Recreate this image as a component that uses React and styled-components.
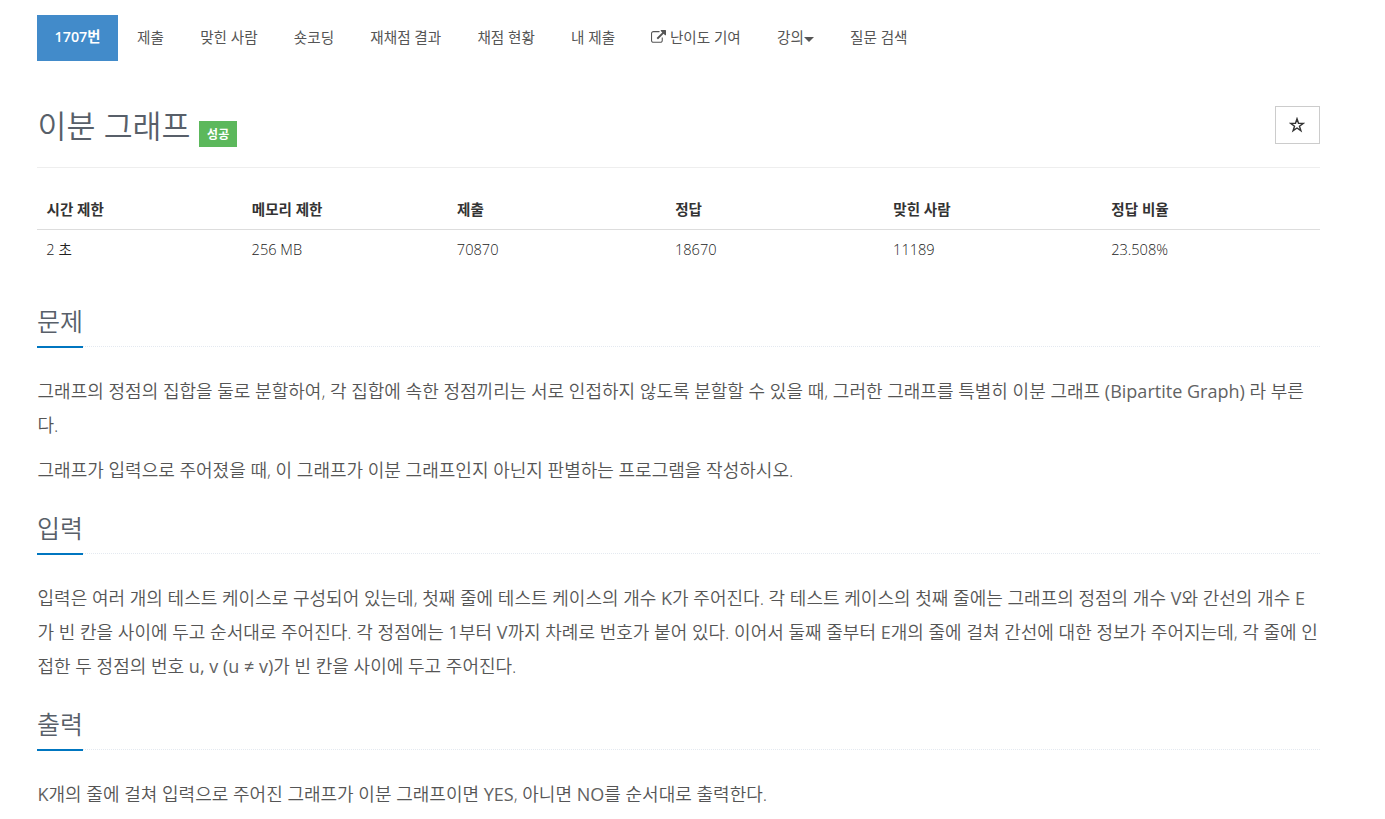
import React from "react";
import styled, { createGlobalStyle } from "styled-components";

const menus = [
  { name: "1707번", active: true },
  { name: "제출" },
  { name: "맞힌 사람" },
  { name: "숏코딩" },
  { name: "재채점 결과" },
  { name: "채점 현황" },
  { name: "내 제출" },
  { name: "난이도 기여", external: true },
  { name: "강의", dropdown: true },
  { name: "질문 검색" },
];

const infos = [
  { label: "시간 제한", value: "2 초", width: "16%" },
  { label: "메모리 제한", value: "256 MB", width: "16%" },
  { label: "제출", value: "70870", width: "17%" },
  { label: "정답", value: "18670", width: "17%" },
  { label: "맞힌 사람", value: "11189", width: "17%" },
  { label: "정답 비율", value: "23.508%", width: "17%" },
];

const sections = [
  {
    title: "문제",
    paragraphs: [
      "그래프의 정점의 집합을 둘로 분할하여, 각 집합에 속한 정점끼리는 서로 인접하지 않도록 분할할 수 있을 때, 그러한 그래프를 특별히 이분 그래프 (Bipartite Graph) 라 부른다.",
      "그래프가 입력으로 주어졌을 때, 이 그래프가 이분 그래프인지 아닌지 판별하는 프로그램을 작성하시오.",
    ],
  },
  {
    title: "입력",
    paragraphs: [
      "입력은 여러 개의 테스트 케이스로 구성되어 있는데, 첫째 줄에 테스트 케이스의 개수 K가 주어진다. 각 테스트 케이스의 첫째 줄에는 그래프의 정점의 개수 V와 간선의 개수 E가 빈 칸을 사이에 두고 순서대로 주어진다. 각 정점에는 1부터 V까지 차례로 번호가 붙어 있다. 이어서 둘째 줄부터 E개의 줄에 걸쳐 간선에 대한 정보가 주어지는데, 각 줄에 인접한 두 정점의 번호 u, v (u ≠ v)가 빈 칸을 사이에 두고 주어진다.",
    ],
  },
  {
    title: "출력",
    paragraphs: [
      "K개의 줄에 걸쳐 입력으로 주어진 그래프가 이분 그래프이면 YES, 아니면 NO를 순서대로 출력한다.",
    ],
  },
];

// latin words are set in the regular weight, the light one is too thin next to hangul
function Text({ children }) {
  return children
    .split(/([A-Za-z0-9(][A-Za-z0-9(), ≠]*[A-Za-z0-9)]|[A-Za-z0-9])/)
    .map((part, i) => (i % 2 ? <Latin key={i}>{part}</Latin> : part));
}

function ExternalIcon() {
  return (
    <svg width="15" height="15" viewBox="0 0 1792 1792" fill="currentColor">
      <path d="M1408 928v320q0 119-84.5 203.5t-203.5 84.5h-832q-119 0-203.5-84.5t-84.5-203.5v-832q0-119 84.5-203.5t203.5-84.5h704q14 0 23 9t9 23v64q0 14-9 23t-23 9h-704q-66 0-113 47t-47 113v832q0 66 47 113t113 47h832q66 0 113-47t47-113v-320q0-14 9-23t23-9h64q14 0 23 9t9 23zm384-864v512q0 26-19 45t-45 19-45-19l-176-176-652 652q-10 10-23 10t-23-10l-114-114q-10-10-10-23t10-23l652-652-176-176q-19-19-19-45t19-45 45-19h512q26 0 45 19t19 45z" />
    </svg>
  );
}

function StarIcon() {
  return (
    <svg width="16" height="16" viewBox="0 0 16 16" fill="none" stroke="#333" strokeWidth="1.4">
      <path d="M8 1.8l1.5 4.5 4.8.1-3.8 2.8 1.4 4.5L8 11l-3.9 2.7 1.4-4.5-3.8-2.8 4.8-.1z" />
    </svg>
  );
}

export default function App() {
  return (
    <Container>
      <GlobalStyle />
      <Menu>
        {menus.map((menu) => (
          <MenuItem key={menu.name} $active={menu.active}>
            {menu.external && <ExternalIcon />}
            <span>{menu.name}</span>
            {menu.dropdown && <Caret />}
          </MenuItem>
        ))}
      </Menu>
      <Header>
        <Title>이분 그래프</Title>
        <Label>성공</Label>
        <StarButton>
          <StarIcon />
        </StarButton>
      </Header>
      <Table>
        <thead>
          <tr>
            {infos.map((info) => (
              <Th key={info.label} $width={info.width}>
                {info.label}
              </Th>
            ))}
          </tr>
        </thead>
        <tbody>
          <tr>
            {infos.map((info) => (
              <Td key={info.label}>{info.value}</Td>
            ))}
          </tr>
        </tbody>
      </Table>
      {sections.map((section) => (
        <Section key={section.title}>
          <Headline>
            <h2>{section.title}</h2>
          </Headline>
          {section.paragraphs.map((text) => (
            <Paragraph key={text}>
              <Text>{text}</Text>
            </Paragraph>
          ))}
        </Section>
      ))}
    </Container>
  );
}

const GlobalStyle = createGlobalStyle`
  * {
    box-sizing: border-box;
  }
  body {
    margin: 0;
    background: #fff;
    color: #333;
    font-family: "Open Sans", "Noto Sans CJK KR", sans-serif;
    font-size: 14.6px;
  }
`;

const Latin = styled.span`
  color: #626262;
  font-weight: 400;
`;

const Container = styled.div`
  width: 1283px;
  height: 819px;
  margin-left: 37px;
  padding-top: 15px;
  overflow: hidden;
`;

const Menu = styled.nav`
  display: flex;
  height: 46px;
`;

const MenuItem = styled.a`
  display: flex;
  align-items: center;
  justify-content: center;
  width: ${(props) => (props.$active ? "81px" : "auto")};
  margin-right: ${(props) => (props.$active ? "1px" : "0")};
  padding: ${(props) => (props.$active ? "0 0 2px" : "0 18.1px 2px")};
  line-height: 20px;
  white-space: nowrap;
  color: ${(props) => (props.$active ? "#fff" : "#555")};
  background: ${(props) => (props.$active ? "#428bca" : "transparent")};
  font-size: ${(props) => (props.$active ? "14.3px" : "14.6px")};
  font-weight: ${(props) => (props.$active ? 600 : 400)};
  svg {
    margin-right: 3.5px;
  }
`;

const Caret = styled.i`
  margin: 4px 0 0;
  border-top: 5px solid #555;
  border-left: 5px solid transparent;
  border-right: 5px solid transparent;
`;

const Header = styled.header`
  display: flex;
  align-items: flex-start;
  height: 107px;
  padding-top: 45px;
  border-bottom: 1px solid #eee;
`;

const Title = styled.h1`
  margin: 0;
  padding-left: 0.5px;
  color: #585f69;
  font-size: 31.5px;
  font-weight: 350;
  line-height: 40px;
`;

const Label = styled.span`
  margin: 15px 0 0 8.5px;
  padding: 1px 8px 0;
  height: 26px;
  line-height: 26px;
  color: #fff;
  background: #5cb85c;
  font-size: 12px;
  font-weight: 700;
`;

const StarButton = styled.button`
  display: flex;
  align-items: center;
  justify-content: center;
  width: 45px;
  height: 38px;
  margin-left: auto;
  padding: 0 2px 1px 0;
  background: #fff;
  border: 1px solid #ccc;
`;

const Table = styled.table`
  width: 100%;
  margin-top: 21px;
  border-collapse: collapse;
  table-layout: fixed;
  text-align: left;
`;

const Th = styled.th`
  width: ${(props) => props.$width};
  height: 40px;
  padding: 0 9.5px;
  font-size: 14.55px;
  font-weight: 700;
  border-bottom: 1px solid #ddd;
`;

const Td = styled.td`
  height: 40px;
  padding: 0 9.3px;
  color: #222;
  line-height: 20px;
  font-weight: 350;
`;

const Section = styled.section`
  padding-top: 33px;
  & + & {
    padding-top: 11px;
  }
`;

const Headline = styled.div`
  display: flex;
  height: 45px;
  margin-bottom: 27px;
  border-bottom: 1px dotted #e4e9f0;
  h2 {
    height: 46px;
    margin: 0;
    color: #585f69;
    font-size: 25px;
    font-weight: 350;
    line-height: 38px;
    border-bottom: 2px solid #0076c0;
  }
`;

const Paragraph = styled.p`
  margin: 0 0 11px;
  padding-left: 0.5px;
  color: #555;
  font-size: 18.03px;
  font-weight: 350;
  line-height: 34px;
`;
